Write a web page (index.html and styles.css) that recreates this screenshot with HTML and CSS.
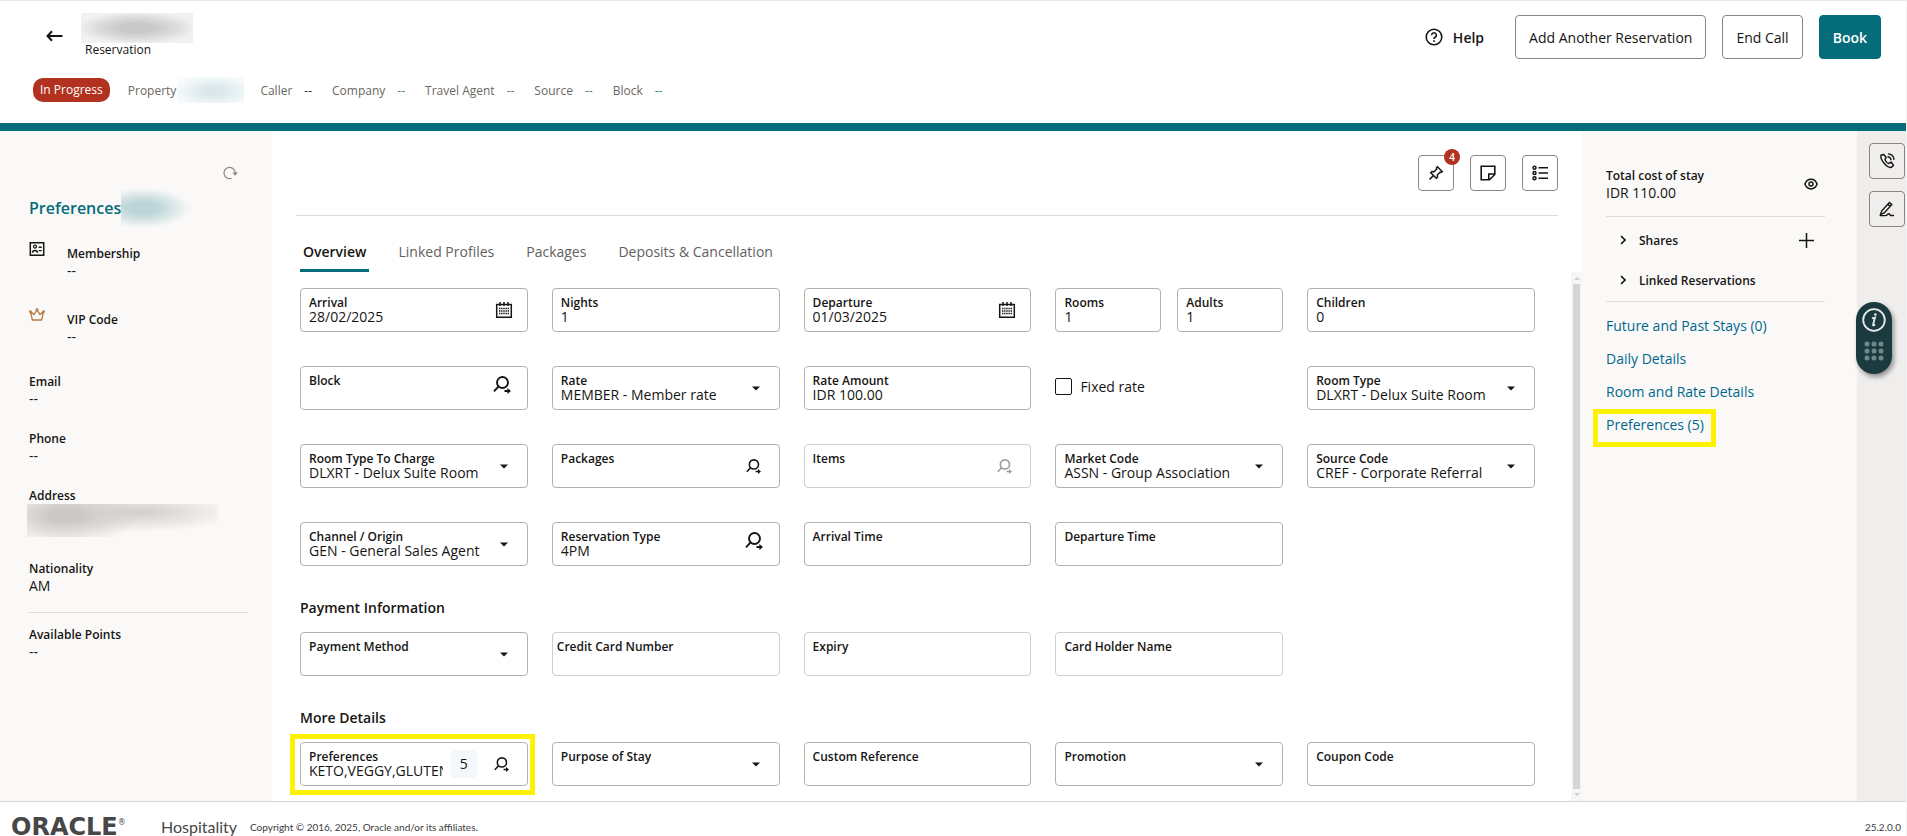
FILE: index.html
```html
<!DOCTYPE html>
<html lang="en">
<head>
  <meta charset="UTF-8">
  <meta name="viewport" content="width=device-width, initial-scale=1.0">
  <title>Reservation</title>
  <link rel="stylesheet" href="styles.css">
</head>
<body>
  <!-- shared icons -->
  <svg class="sprite" aria-hidden="true">
    <symbol id="icon-search" viewBox="0 0 18 18">
      <circle cx="9.5" cy="6.5" r="5.5" fill="none" stroke="currentColor" stroke-width="1.9"/>
      <path d="M5.6 10.4L1 15.4M11.5 15h4" fill="none" stroke="currentColor" stroke-width="1.9"/>
      <path d="M14.4 12l3.6 3-3.6 3z" fill="currentColor"/>
    </symbol>
    <symbol id="icon-calendar" viewBox="0 0 18 18">
      <path d="M1.7 3.5h14.6v12.8H1.7zM5 1v4M9 1v4M13 1v4" fill="none" stroke="currentColor" stroke-width="1.5"/>
      <path d="M4 7.5h10M4 10h10M4 12.5h10" fill="none" stroke="currentColor" stroke-width="1.3" stroke-dasharray="1.4 0.75"/>
    </symbol>
    <symbol id="icon-caret" viewBox="0 0 8 5">
      <path d="M0 0.5h8L4 4.5z" fill="currentColor"/>
    </symbol>
    <symbol id="icon-chevron" viewBox="0 0 6 10">
      <path d="M1 1l4 4-4 4" fill="none" stroke="currentColor" stroke-width="1.6"/>
    </symbol>
  </svg>

  <header class="header">
    <div class="header-top">
      <button class="back" aria-label="Back">
        <svg width="17" height="12" viewBox="0 0 17 12"><path d="M16.5 6H2M6 1.2L1.5 6 6 10.8" fill="none" stroke="currentColor" stroke-width="2"/></svg>
      </button>
      <div class="page-title">
        <div class="redacted redacted-title"></div>
        <div class="page-type">Reservation</div>
      </div>
      <div class="header-actions">
        <button class="help">
          <svg width="18" height="18" viewBox="0 0 18 18" fill="none" stroke="currentColor" stroke-width="1.6"><circle cx="9" cy="9" r="7.8"/><path d="M6.6 7.2a2.4 2.4 0 1 1 3.6 2.1c-.9.5-1.2.9-1.2 1.7"/><path d="M9 12.2v1.7"/></svg>
          Help
        </button>
        <button class="btn">Add Another Reservation</button>
        <button class="btn">End Call</button>
        <button class="btn btn-primary">Book</button>
      </div>
    </div>
    <div class="context">
      <span class="status">In Progress</span>
      <div class="context-item context-property">Property <span class="redacted redacted-property"></span></div>
      <div class="context-item">Caller <span class="dark">--</span></div>
      <div class="context-item">Company <span>--</span></div>
      <div class="context-item">Travel Agent <span>--</span></div>
      <div class="context-item">Source <span>--</span></div>
      <div class="context-item">Block <span>--</span></div>
    </div>
  </header>

  <main class="layout">
    <aside class="profile">
      <button class="refresh" aria-label="Refresh">
        <svg width="15" height="14" viewBox="0 0 15 14"><path d="M8.5 12.3A5.6 5.6 0 1 1 12.2 7.5" fill="none" stroke="currentColor" stroke-width="1.2"/><path d="M9.4 6.6h5.4l-2.6 3.2z" fill="currentColor"/></svg>
      </button>
      <div class="profile-name">
        <h2>Preferences</h2>
        <span class="redacted redacted-name"></span>
      </div>
      <div class="stat stat-icon">
        <svg width="15" height="14" viewBox="0 0 15 14"><path d="M.8.8h13.4v12.4H.8z" fill="none" stroke="currentColor" stroke-width="1.5"/><circle cx="5.5" cy="4.6" r="1.5" fill="none" stroke="currentColor" stroke-width="1.2"/><path d="M3 10.8c0-3 5-3 5 0M9.2 5.2h3M9.2 8.6h3" fill="none" stroke="currentColor" stroke-width="1.4"/></svg>
        <div><b>Membership</b><span>--</span></div>
      </div>
      <div class="stat stat-icon">
        <svg class="crown" width="16" height="13" viewBox="0 0 16 13"><path d="M1.4 3.6l2 8.4h9.2l2-8.4-3.6 3L8 1.8l-3 4.8z" fill="none" stroke="currentColor" stroke-width="1.3"/><circle cx="1.5" cy="3.8" r="1.4" fill="currentColor"/><circle cx="8" cy="1.6" r="1.4" fill="currentColor"/><circle cx="14.5" cy="3.8" r="1.4" fill="currentColor"/></svg>
        <div><b>VIP Code</b><span>--</span></div>
      </div>
      <div class="stat"><b>Email</b><span>--</span></div>
      <div class="stat"><b>Phone</b><span>--</span></div>
      <div class="stat"><b>Address</b><span class="redacted redacted-address"></span></div>
      <div class="stat"><b>Nationality</b><span>AM</span></div>
      <hr>
      <div class="stat"><b>Available Points</b><span>--</span></div>
    </aside>

    <section class="content">
      <div class="toolbar">
        <button class="icon-btn" aria-label="Alerts">
          <svg width="16" height="16" viewBox="0 0 18 18" fill="none" stroke="currentColor" stroke-width="1.7"><path d="M10.6 2l5.4 5.4-1.5 1-1-.2-3 3 .2 2.4-1.4 1.3L3.1 8.7l1.3-1.4 2.4.2 3-3-.3-1zM6.2 11.8L1.8 16.2"/></svg>
          <span class="badge">4</span>
        </button>
        <button class="icon-btn" aria-label="Notes">
          <svg width="16" height="16" viewBox="0 0 16 16" fill="none" stroke="currentColor" stroke-width="1.6"><path d="M1.2 1.2h13.6v8.3l-5.3 5.3H1.2zM8.8 14.8V9h6"/></svg>
        </button>
        <button class="icon-btn" aria-label="List">
          <svg width="16" height="16" viewBox="0 0 16 16" fill="none" stroke="currentColor" stroke-width="1.5"><circle cx="2.5" cy="2.7" r="1.5"/><circle cx="2.5" cy="8" r="1.5"/><circle cx="2.5" cy="13.3" r="1.5"/><path d="M6.5 2.7H16M6.5 8H16M6.5 13.3H16"/></svg>
        </button>
      </div>
      <nav class="tabs">
        <a href="#" class="active">Overview</a>
        <a href="#">Linked Profiles</a>
        <a href="#">Packages</a>
        <a href="#">Deposits &amp; Cancellation</a>
      </nav>

      <div class="scroll">
        <form class="form">
          <div class="grid">
            <div class="field">
              <div class="field-body"><label for="arrival">Arrival</label><input id="arrival" value="28/02/2025"></div>
              <svg class="icon icon-lg"><use href="#icon-calendar"/></svg>
            </div>
            <div class="field">
              <div class="field-body"><label for="nights">Nights</label><input id="nights" value="1"></div>
            </div>
            <div class="field">
              <div class="field-body"><label for="departure">Departure</label><input id="departure" value="01/03/2025"></div>
              <svg class="icon icon-lg"><use href="#icon-calendar"/></svg>
            </div>
            <div class="split">
              <div class="field">
                <div class="field-body"><label for="rooms">Rooms</label><input id="rooms" value="1"></div>
              </div>
              <div class="field">
                <div class="field-body"><label for="adults">Adults</label><input id="adults" value="1"></div>
              </div>
            </div>
            <div class="field">
              <div class="field-body"><label for="children">Children</label><input id="children" value="0"></div>
            </div>

            <div class="field">
              <div class="field-body"><label for="block">Block</label><input id="block"></div>
              <svg class="icon icon-lg icon-raised"><use href="#icon-search"/></svg>
            </div>
            <div class="field">
              <div class="field-body"><label for="rate">Rate</label><select id="rate"><option>MEMBER - Member rate</option></select></div>
              <svg class="icon icon-caret"><use href="#icon-caret"/></svg>
            </div>
            <div class="field">
              <div class="field-body"><label for="amount">Rate Amount</label><input id="amount" value="IDR 100.00"></div>
            </div>
            <label class="check"><input type="checkbox"> Fixed rate</label>
            <div class="field">
              <div class="field-body"><label for="room-type">Room Type</label><select id="room-type"><option>DLXRT - Delux Suite Room</option></select></div>
              <svg class="icon icon-caret"><use href="#icon-caret"/></svg>
            </div>

            <div class="field">
              <div class="field-body"><label for="charge">Room Type To Charge</label><select id="charge"><option>DLXRT - Delux Suite Room</option></select></div>
              <svg class="icon icon-caret"><use href="#icon-caret"/></svg>
            </div>
            <div class="field">
              <div class="field-body"><label for="packages">Packages</label><input id="packages"></div>
              <svg class="icon"><use href="#icon-search"/></svg>
            </div>
            <div class="field disabled">
              <div class="field-body"><label for="items">Items</label><input id="items" disabled></div>
              <svg class="icon"><use href="#icon-search"/></svg>
            </div>
            <div class="field">
              <div class="field-body"><label for="market">Market Code</label><select id="market"><option>ASSN - Group Association</option></select></div>
              <svg class="icon icon-caret"><use href="#icon-caret"/></svg>
            </div>
            <div class="field">
              <div class="field-body"><label for="source">Source Code</label><select id="source"><option>CREF - Corporate Referral</option></select></div>
              <svg class="icon icon-caret"><use href="#icon-caret"/></svg>
            </div>

            <div class="field">
              <div class="field-body"><label for="channel">Channel / Origin</label><select id="channel"><option>GEN - General Sales Agent</option></select></div>
              <svg class="icon icon-caret"><use href="#icon-caret"/></svg>
            </div>
            <div class="field">
              <div class="field-body"><label for="res-type">Reservation Type</label><input id="res-type" value="4PM"></div>
              <svg class="icon icon-lg icon-raised"><use href="#icon-search"/></svg>
            </div>
            <div class="field">
              <div class="field-body"><label for="arrival-time">Arrival Time</label><input id="arrival-time"></div>
            </div>
            <div class="field">
              <div class="field-body"><label for="departure-time">Departure Time</label><input id="departure-time"></div>
            </div>
          </div>

          <h3>Payment Information</h3>
          <div class="grid">
            <div class="field">
              <div class="field-body"><label for="method">Payment Method</label><select id="method"><option></option></select></div>
              <svg class="icon icon-caret"><use href="#icon-caret"/></svg>
            </div>
            <div class="field disabled field-tight">
              <div class="field-body"><label for="card">Credit Card Number</label><input id="card" disabled></div>
            </div>
            <div class="field disabled">
              <div class="field-body"><label for="expiry">Expiry</label><input id="expiry" disabled></div>
            </div>
            <div class="field disabled">
              <div class="field-body"><label for="holder">Card Holder Name</label><input id="holder" disabled></div>
            </div>
          </div>

          <h3>More Details</h3>
          <div class="grid">
            <div class="field highlight">
              <div class="field-body"><label for="preferences">Preferences</label><input id="preferences" value="KETO,VEGGY,GLUTEN"></div>
              <span class="chip">5</span>
              <svg class="icon"><use href="#icon-search"/></svg>
            </div>
            <div class="field">
              <div class="field-body"><label for="purpose">Purpose of Stay</label><select id="purpose"><option></option></select></div>
              <svg class="icon icon-caret"><use href="#icon-caret"/></svg>
            </div>
            <div class="field">
              <div class="field-body"><label for="custom">Custom Reference</label><input id="custom"></div>
            </div>
            <div class="field">
              <div class="field-body"><label for="promotion">Promotion</label><select id="promotion"><option></option></select></div>
              <svg class="icon icon-caret"><use href="#icon-caret"/></svg>
            </div>
            <div class="field">
              <div class="field-body"><label for="coupon">Coupon Code</label><input id="coupon"></div>
            </div>
          </div>
        </form>
        <div class="scrollbar">
          <span class="arrow-up"></span>
          <span class="thumb"></span>
          <span class="arrow-down"></span>
        </div>
      </div>
    </section>

    <aside class="summary">
      <div class="cost">
        <div class="stat"><b>Total cost of stay</b><span>IDR 110.00</span></div>
        <button aria-label="Show cost">
          <svg width="14" height="12" viewBox="0 0 14 12" fill="none" stroke="currentColor" stroke-width="1.5"><path d="M.9 6C3.4-.5 10.6-.5 13.1 6 10.6 12.5 3.4 12.5.9 6z"/><circle cx="7" cy="6" r="2"/></svg>
        </button>
      </div>
      <hr>
      <div class="group">
        <svg class="chevron"><use href="#icon-chevron"/></svg>
        <span>Shares</span>
        <button aria-label="Add share">
          <svg width="15" height="15" viewBox="0 0 15 15"><path d="M7.5 0v15M0 7.5h15" fill="none" stroke="currentColor" stroke-width="1.5"/></svg>
        </button>
      </div>
      <div class="group">
        <svg class="chevron"><use href="#icon-chevron"/></svg>
        <span>Linked Reservations</span>
      </div>
      <hr>
      <ul class="links">
        <li><a href="#">Future and Past Stays (0)</a></li>
        <li><a href="#">Daily Details</a></li>
        <li><a href="#">Room and Rate Details</a></li>
        <li><a href="#" class="highlight">Preferences (5)</a></li>
      </ul>
    </aside>

    <aside class="rail">
      <button class="icon-btn" aria-label="Call">
        <svg width="16" height="16" viewBox="0 0 16 16" fill="none" stroke="currentColor" stroke-width="1.4"><path d="M4.8 1.5L2 2.2C.8 6.5 8 15.5 12.5 14.3l2-1.8-2.3-3.3-2.7 1.3C8.2 10 6.3 7.8 6 6.3l1.2-1.8z"/><path d="M8.5 3.8c2.2 0 3.3 1.5 3.5 3.5M9 .9c3.4.1 5.8 2.4 6 6"/></svg>
      </button>
      <button class="icon-btn" aria-label="Sign">
        <svg width="16" height="16" viewBox="0 0 16 16" fill="none" stroke="currentColor" stroke-width="1.4"><path d="M1.5 13.6l1.3-3.8 7.6-8.3 2.4 2.1-7.6 8.4zM8.8 3.4l2.4 2.1M1 14.6h5.5c1.5 0 2-1.8 3.3-1.8 1.2 0 .9 1.7 2.2 1.7h3"/></svg>
      </button>
      <div class="assist">
        <svg width="24" height="24" viewBox="0 0 24 24"><circle cx="12" cy="12" r="10.8" fill="none" stroke="#e8eded" stroke-width="1.8"/><path d="M10 10.3l3-.8-2 7.4c-.1.8.8.7 2-.6" fill="none" stroke="#e8eded" stroke-width="1.8"/><circle cx="13.4" cy="6.5" r="1.3" fill="#e8eded"/></svg>
        <svg width="20" height="20" viewBox="0 0 20 20" fill="#71878a"><circle cx="3" cy="3" r="2.5"/><circle cx="10" cy="3" r="2.5"/><circle cx="17" cy="3" r="2.5"/><circle cx="3" cy="10" r="2.5"/><circle cx="10" cy="10" r="2.5"/><circle cx="17" cy="10" r="2.5"/><circle cx="3" cy="17" r="2.5"/><circle cx="10" cy="17" r="2.5"/><circle cx="17" cy="17" r="2.5"/></svg>
      </div>
    </aside>
  </main>

  <footer class="footer">
    <span class="logo">ORACLE<sup>®</sup></span>
    <span class="product">Hospitality</span>
    <span>Copyright © 2016, 2025, Oracle and/or its affiliates.</span>
    <span class="version">25.2.0.0</span>
  </footer>
</body>
</html>
```
FILE: styles.css
```css
* {
  box-sizing: border-box;
}
body {
  margin: 0;
  height: 100vh;
  display: flex;
  flex-direction: column;
  overflow: hidden;
  font-family: "Open Sans", "Noto Sans", sans-serif;
  font-size: 14px;
  color: #161513;
  background-color: #fff;
  border-top: 1px solid #e8e8e8;
  border-right: 1px solid #f5f5f5;
}
button {
  font: inherit;
  color: inherit;
  background: none;
  border: none;
  padding: 0;
  cursor: pointer;
}
a {
  text-decoration: none;
}
svg {
  display: block;
  flex: none;
}
hr {
  border: none;
  border-top: 1px solid #dddcda;
  margin: 0;
}
.sprite {
  position: absolute;
  width: 0;
  height: 0;
}

/* header */
.header {
  height: 130px;
  flex: none;
  border-bottom: 8px solid #056c7a;
}
.header-top {
  display: flex;
  padding: 12px 25px 0 46px;
}
.back {
  align-self: center;
  margin-right: 18px;
}
.page-title {
  width: 112px;
}
.page-type {
  font-size: 12px;
  line-height: 14px;
  padding-left: 4px;
}
.header-actions {
  display: flex;
  gap: 16px;
  margin-left: auto;
  padding-top: 2px;
}
.help {
  display: flex;
  align-items: center;
  gap: 10px;
  margin-right: 15px;
  font-weight: 600;
}
.btn {
  height: 44px;
  padding: 0 13px;
  border: 1px solid #8b8580;
  border-radius: 4px;
  font-weight: 500;
}
.btn-primary {
  background-color: #056c7a;
  border-color: #056c7a;
  color: #fff;
  font-weight: 600;
}
.context {
  display: flex;
  align-items: center;
  gap: 20px;
  height: 26px;
  margin-top: 18px;
  padding-left: 33px;
  font-size: 12px;
  color: #6b6763;
}
.context-item {
  display: flex;
  align-items: center;
  gap: 12px;
}
.context-item span {
  color: #4c7f8c;
}
.context-item .dark {
  color: #333;
}
.context-property {
  gap: 1px;
  margin: 0 -4px 0 -2px;
}
.status {
  padding: 0 7px;
  line-height: 24px;
  border-radius: 10px;
  background-color: #b3311f;
  color: #fff;
  font-weight: 500;
}

/* hidden personal data */
.redacted {
  display: block;
}
.redacted-title {
  height: 30px;
  background: radial-gradient(ellipse at center, #c9c9c9 20%, #dcdcdc 50%, #f1f1f1 75%);
}
.redacted-property {
  width: 67px;
  height: 26px;
  background: radial-gradient(ellipse at 55% 55%, #dbe8eb 20%, #eff6f7 60%, #f8fbfc 80%);
}
.redacted-name {
  width: 72px;
  height: 40px;
  background: radial-gradient(ellipse 66% 50% at 30% 50%, #bcd5d8 30%, #d5e3e4 60%, #faf9f8 100%);
}
.redacted-address {
  width: 191px;
  height: 33px;
  margin-left: -2px;
  background: radial-gradient(ellipse 40% 90% at 20% 35%, #cac9c8 20%, transparent 100%), radial-gradient(ellipse 50% 60% at 60% 25%, #d4d3d2 10%, #faf9f8 100%);
}

.layout {
  flex: 1;
  min-height: 0;
  display: grid;
  grid-template-columns: 272px 1fr 275px 49px;
}

/* left panel */
.profile {
  padding: 34px 24px 0 29px;
  background-color: #faf9f8;
}
.refresh {
  display: block;
  height: 16px;
  margin: 0 10px 0 auto;
  color: #8b8580;
}
.profile-name {
  display: flex;
  align-items: center;
  height: 40px;
  margin: 7px 0 17px;
}
.profile-name h2 {
  margin: 0;
  font-size: 16px;
  font-weight: 600;
  color: #056c7a;
}
.stat b,
.stat span {
  display: block;
  line-height: 17px;
}
.stat b {
  font-size: 12px;
  font-weight: 600;
}
.profile .stat {
  margin-bottom: 23px;
}
.profile .stat-icon {
  display: flex;
  gap: 22px;
  margin-bottom: 32px;
}
.profile .stat-icon + .stat-icon {
  margin-bottom: 28px;
}
.profile .stat-icon svg {
  width: 16px;
  margin-top: -3px;
}
.crown {
  color: #b97a46;
}
.profile hr {
  margin: -5px 0 13px;
}

/* center */
.content {
  display: flex;
  flex-direction: column;
  min-width: 0;
  min-height: 0;
}
.toolbar {
  display: flex;
  justify-content: flex-end;
  gap: 16px;
  margin: 0 24px;
  padding: 24px 0;
  border-bottom: 1px solid #dddcda;
}
.icon-btn {
  position: relative;
  display: flex;
  align-items: center;
  justify-content: center;
  width: 36px;
  height: 36px;
  border: 1px solid #8b8580;
  border-radius: 4px;
}
.badge {
  position: absolute;
  top: -7px;
  right: -7px;
  width: 16px;
  height: 16px;
  border-radius: 50%;
  background-color: #b3311f;
  color: #fff;
  font-size: 10px;
  font-weight: 600;
  line-height: 16px;
}
.tabs {
  display: flex;
  gap: 26px;
  height: 56px;
  padding: 0 28px;
}
.tabs a {
  padding: 0 3px;
  line-height: 72px;
  height: 56px;
  font-weight: 500;
  color: #63605d;
}
.tabs .active {
  color: #161513;
  font-weight: 600;
  border-bottom: 3px solid #056c7a;
}
.scroll {
  flex: 1;
  min-height: 0;
  display: flex;
}
.form {
  flex: 1;
  padding: 16px 36px 0 28px;
}
.grid {
  display: grid;
  grid-template-columns: repeat(5, 1fr);
  gap: 34px 24px;
}
.split {
  display: grid;
  grid-template-columns: 1fr 1fr;
  gap: 16px;
}
h3 {
  margin: 32px 0 14px;
  font-size: 14px;
  font-weight: 600;
  line-height: 20px;
}
.field {
  display: flex;
  align-items: center;
  min-width: 0;
  height: 44px;
  padding-left: 8px;
  border: 1px solid #b3b1af;
  border-radius: 4px;
}
.field-tight {
  padding-left: 4px;
}
.field-body {
  flex: 1;
  min-width: 0;
  align-self: flex-start;
  padding-top: 7px;
}
.field label {
  display: block;
  font-size: 12px;
  line-height: 14px;
  font-weight: 600;
}
.field input,
.field select {
  display: block;
  width: 100%;
  height: 20px;
  margin: -4px 0 0;
  padding: 0;
  border: none;
  outline: none;
  appearance: none;
  background: none;
  font: inherit;
  color: inherit;
}
.icon {
  width: 15px;
  height: 15px;
  margin: 0 18px 0 16px;
}
.icon-lg {
  width: 18px;
  height: 18px;
  margin: 0 14px;
}
.icon-raised {
  margin: 0 16px 6px 12px;
}
.icon-caret {
  width: 8px;
  height: 5px;
  margin: 0 19px 0 0;
  pointer-events: none;
}
.disabled {
  border-color: #d0cfcd;
}
.disabled .icon {
  color: #9e9b98;
}
.chip {
  width: 28px;
  margin-left: 7px;
  line-height: 28px;
  border-radius: 6px;
  background-color: #f3f8fc;
  text-align: center;
}
.check {
  display: flex;
  align-items: center;
  gap: 8px;
  height: 40px;
}
.check input {
  appearance: none;
  width: 17px;
  height: 17px;
  margin: 0;
  border: 1px solid #161513;
  border-radius: 2px;
}
.highlight {
  position: relative;
}
.highlight::after {
  content: "";
  position: absolute;
  inset: -9px -8px -10px -11px;
  border: 5px solid #fff200;
  pointer-events: none;
}
.scrollbar {
  display: flex;
  flex-direction: column;
  align-items: center;
  gap: 4px;
  width: 11px;
  padding: 5px 0;
  background-color: #f7f6f5;
}
.thumb {
  flex: 1;
  width: 7px;
  background-color: #d6d5d4;
}
.arrow-up,
.arrow-down {
  border: 3px solid transparent;
  border-top: none;
  border-bottom-color: #cfcecd;
}
.arrow-down {
  transform: rotate(180deg);
}

/* right panel */
.summary {
  padding: 36px 32px 0 24px;
  background-color: #faf9f8;
}
.cost {
  display: flex;
  align-items: center;
  justify-content: space-between;
  padding-right: 7px;
  margin-bottom: 15px;
}
.group {
  display: flex;
  align-items: center;
  height: 40px;
  padding: 0 11px 0 14px;
  font-size: 12px;
  font-weight: 600;
}
.cost + hr + .group {
  margin-top: 3px;
}
.group + hr {
  margin-top: 1px;
}
.chevron {
  width: 6px;
  height: 10px;
  margin-right: 13px;
}
.group button {
  margin-left: auto;
}
.links {
  list-style: none;
  margin: 7px 0 0;
  padding: 0;
  line-height: 33px;
}
.links a {
  color: #00688c;
}
.links .highlight::after {
  inset: -6px -12px -13px -13px;
}

/* right rail */
.rail {
  display: flex;
  flex-direction: column;
  gap: 12px;
  padding: 12px 0 0 12px;
  background-color: #efeeed;
}
.assist {
  display: flex;
  flex-direction: column;
  align-items: center;
  gap: 9px;
  width: 36px;
  height: 72px;
  margin: 63px 0 0 -13px;
  padding-top: 6px;
  border-radius: 18px;
  background-color: #1b3a3f;
  box-shadow: 2px 3px 5px rgba(0, 0, 0, 0.4);
}

.footer {
  display: flex;
  align-items: center;
  flex: none;
  height: 35px;
  padding: 16px 5px 0 11px;
  border-top: 1px solid #d4d3d1;
  font-family: Lato, sans-serif;
  font-size: 10px;
  line-height: 16px;
  color: #3c3c3c;
}
.logo {
  display: flex;
  width: 150px;
  font-family: "DejaVu Sans", sans-serif;
  font-size: 24px;
  line-height: 16px;
  font-weight: bold;
  color: #474747;
}
.logo sup {
  font-size: 8px;
  line-height: 8px;
  font-weight: normal;
}
.product {
  width: 89px;
  font-size: 16px;
  color: #474747;
}
.version {
  margin-left: auto;
}
```
